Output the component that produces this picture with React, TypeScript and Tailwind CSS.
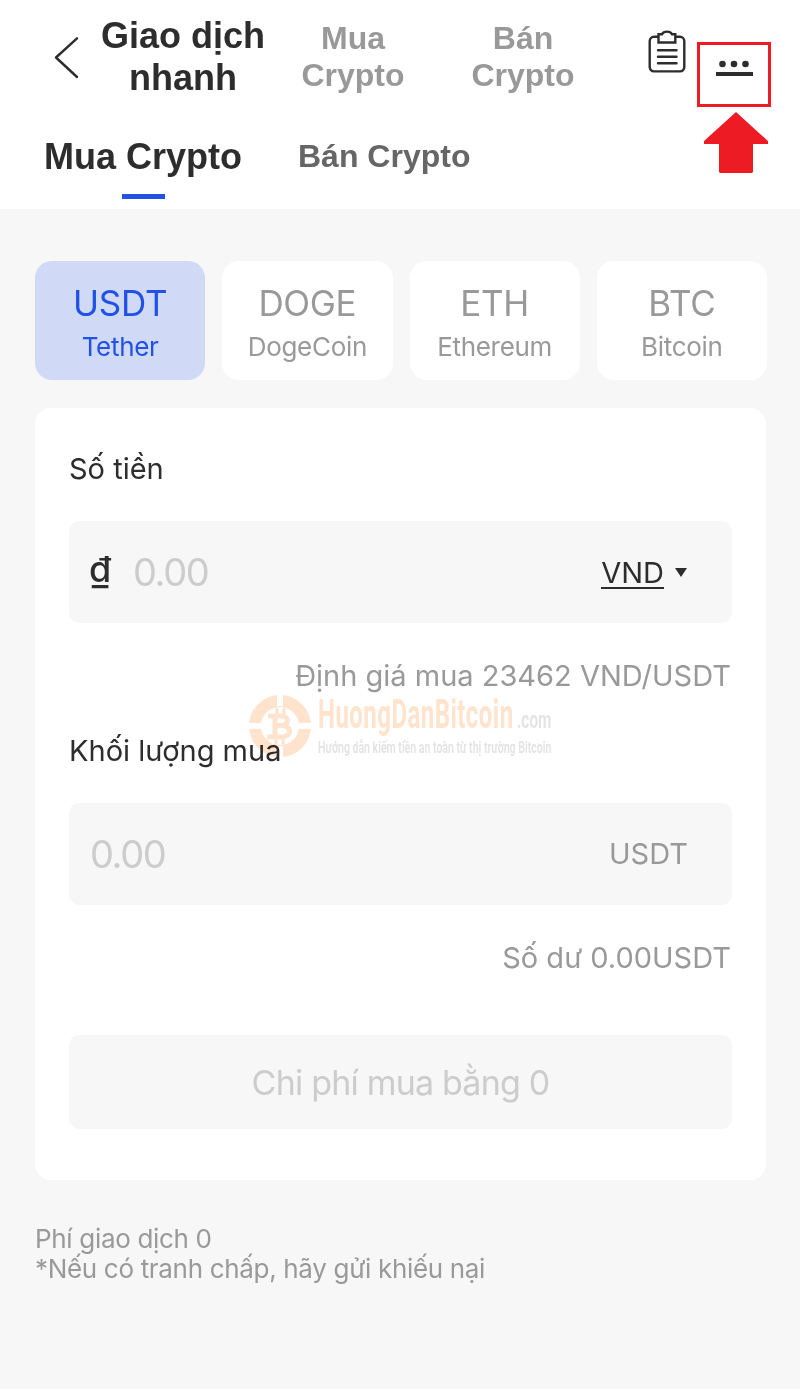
import { useState } from 'react';
import { clsx } from 'clsx';

const COINS = [
  { symbol: 'USDT', name: 'Tether' },
  { symbol: 'DOGE', name: 'DogeCoin' },
  { symbol: 'ETH', name: 'Ethereum' },
  { symbol: 'BTC', name: 'Bitcoin' },
];

function ClipboardIcon() {
  return (
    <svg width="38" height="44" viewBox="0 0 38 44" fill="none" stroke="#2d2d2d" strokeWidth="2.4">
      <path d="M10 6.800H6A4.300 4.300 0 0 0 1.700 11V37A4.300 4.300 0 0 0 6 41.400H32A4.300 4.300 0 0 0 36.300 37V11A4.300 4.300 0 0 0 32 6.800H28" />
      <path d="M10.500 4.200H14C15.800 .7 22.200 .7 24 4.200H27.300V12.500H10.500Z" />
      <path d="M10 20.200H28.500M10 26.800H28.500M10 33.300H28.500" strokeLinecap="round" />
    </svg>
  );
}

function Header() {
  return (
    <header className="flex h-[116px] items-start font-['Liberation_Sans',sans-serif] font-bold">
      <button className="ml-[54px] mt-[36px] w-[25px]" aria-label="Back">
        <svg width="25" height="43" viewBox="0 0 25 43" fill="none" stroke="#2d2d2d" strokeWidth="2.400" strokeLinecap="round" strokeLinejoin="round">
          <path d="M23 2.300L2 21.500L23 41" />
        </svg>
      </button>
      <h1 className="ml-[12px] mt-[15px] w-[184px] text-center text-[36px] leading-[41.500px] text-[#2d2d2d]">
        Giao dịch nhanh
      </h1>
      <button className="ml-[18px] mt-[20px] w-[120px] text-center text-[32px] leading-[37px] text-[#999]">Mua Crypto</button>
      <button className="ml-[50px] mt-[20px] w-[120px] text-center text-[32px] leading-[37px] text-[#999]">Bán Crypto</button>
      <button className="ml-[65px] mt-[30px]" aria-label="Orders">
        <ClipboardIcon />
      </button>
      <button className="ml-[30px] mt-[59px] flex flex-col items-center gap-[3px]" aria-label="More">
        <svg width="36" height="10" viewBox="0 0 36 10" fill="#2d2d2d">
          <circle cx="5.500" cy="5" r="3.300" />
          <circle cx="17" cy="5" r="3.300" />
          <circle cx="28.500" cy="5" r="3.300" />
        </svg>
        <span className="h-[4px] w-[37px] bg-[#2d2d2d]" />
      </button>
    </header>
  );
}

function Tabs() {
  return (
    <nav className="flex h-[93px] items-start pl-[44px] font-['Liberation_Sans',sans-serif] font-bold">
      <div className="flex flex-col items-center">
        <span className="mt-[21px] text-[36px] leading-[40px] text-[#2d2d2d]">Mua Crypto</span>
        <span className="mt-[17px] h-[5px] w-[43px] bg-[#2152e5]" />
      </div>
      <span className="ml-[56px] mt-[20px] text-[32px] leading-[40px] text-[#666]">Bán Crypto</span>
    </nav>
  );
}

function Watermark() {
  return (
    <div className="pointer-events-none absolute left-[248px] top-[692px] flex mix-blend-multiply font-[Roboto,sans-serif]">
      <svg width="70" height="70" viewBox="0 0 70 70">
        <circle cx="32" cy="34" r="25" fill="none" stroke="#ffe3cc" strokeWidth="12" />
        <path d="M32 0V14M32 54V68M-1 34H14M50 34H66" stroke="#fff" strokeWidth="6" />
        <g fill="none" stroke="#ffe3cc" strokeWidth="5">
          <path d="M20 24H33C41.500 24 41.500 33.500 33 33.500H27M33 33.500C44.500 33.500 44.500 45 33 45H19M27 24V45" />
          <path d="M29 16V22M36 16V22M28 47V52.500M35 47V52.500" strokeWidth="3" />
        </g>
      </svg>
      <div className="w-[234px] whitespace-nowrap">
        <div className="flex h-[44px] items-baseline leading-[44px]">
          <span className="w-[199px]">
            <span className="inline-block origin-left scale-x-[0.585] text-[41px] font-bold tracking-[0.8px] text-[#ffe3cc]">HuongDanBitcoin</span>
          </span>
          <span className="w-[36px]">
            <span className="inline-block origin-left scale-x-[0.64] text-[24px] font-semibold text-[#e3e3e3]">.com</span>
          </span>
        </div>
        <p className="w-[234px] origin-left scale-x-[0.62] text-[17px] font-semibold leading-[23px] text-[#e3e3e3]">
          Hướng dẫn kiếm tiền an toàn từ thị trường Bitcoin
        </p>
      </div>
    </div>
  );
}

export default function App() {
  const [coin, setCoin] = useState('USDT');

  return (
    <div className="relative h-[1389px] w-[800px] overflow-hidden bg-[#f7f7f7] font-[Inter,sans-serif] text-[#2d2d2d]">
      <div className="h-[209px] bg-white">
        <Header />
        <Tabs />
      </div>

      <main className="px-[35px] pt-[52px]">
        <div className="flex w-[732px] gap-[17px]">
          {COINS.map(c => (
            <button
              key={c.symbol}
              onClick={() => setCoin(c.symbol)}
              className={clsx(
                'flex h-[119px] flex-1 flex-col items-center rounded-[17px] pt-[22px]',
                coin === c.symbol ? 'bg-[#d0d9f5] text-[#2152e5]' : 'bg-white text-[#999]'
              )}
            >
              <span className="text-[35px] leading-[40px] tracking-[-0.3px]">{c.symbol}</span>
              <span className="mt-[9px] text-[26px] leading-[30px] tracking-[-0.3px]">{c.name}</span>
            </button>
          ))}
        </div>

        <section className="mt-[28px] flex h-[772px] w-[731px] flex-col rounded-[16px] bg-white px-[34px] pt-[40px]">
          <label className="text-[29px] leading-[42px]">Số tiền</label>
          <div className="mt-[31px] flex h-[102px] items-center rounded-[10px] bg-[#f7f7f7] pl-[20px] pr-[45px]">
            <span className="mb-[6px] w-[44px] text-[36px] font-medium">₫</span>
            <span className="flex-1 text-[38px] tracking-[-1.4px] text-[#ccc]">0.00</span>
            <span className="mt-[2px] border-b-2 border-[#2d2d2d] text-[29px] leading-[29px]">VND</span>
            <span className="ml-[11px] border-x-[6.5px] border-t-[9px] border-x-transparent border-t-[#2d2d2d]" />
          </div>
          <p className="mt-[32px] pr-px text-right text-[29px] leading-[42px] text-[#999]">Định giá mua 23462 VND/USDT</p>

          <label className="mt-[33px] text-[29px] leading-[42px]">Khối lượng mua</label>
          <div className="mt-[31px] flex h-[102px] items-center justify-between rounded-[10px] bg-[#f7f7f7] pl-[21px] pr-[44px]">
            <span className="text-[38px] tracking-[-1.4px] text-[#ccc]">0.00</span>
            <span className="text-[29px] text-[#999]">USDT</span>
          </div>
          <p className="mt-[32px] pr-px text-right text-[29px] leading-[42px] text-[#999]">Số dư 0.00USDT</p>

          <button className="mt-[56px] h-[94px] rounded-[10px] bg-[#f7f7f7] text-[34px] tracking-[-0.8px] text-[#ccc]">
            Chi phí mua bằng 0
          </button>
        </section>

        <footer className="mt-[44px] text-[26px] leading-[30px] tracking-[-0.32px] text-[#999]">
          <p>Phí giao dịch 0</p>
          <p>*Nếu có tranh chấp, hãy gửi khiếu nại</p>
        </footer>
      </main>

      <Watermark />

      {/* Highlight around the menu button */}
      <div className="absolute left-[697px] top-[42px] h-[65px] w-[74px] border-3 border-[#ed1c24]" />
      <svg className="absolute left-[704px] top-[112px]" width="64" height="61" viewBox="0 0 64 61" fill="#ed1c24">
        <path d="M32 0L64 29V32H49V60L48 61H16L15 60V32H0V29Z" />
      </svg>
    </div>
  );
}
